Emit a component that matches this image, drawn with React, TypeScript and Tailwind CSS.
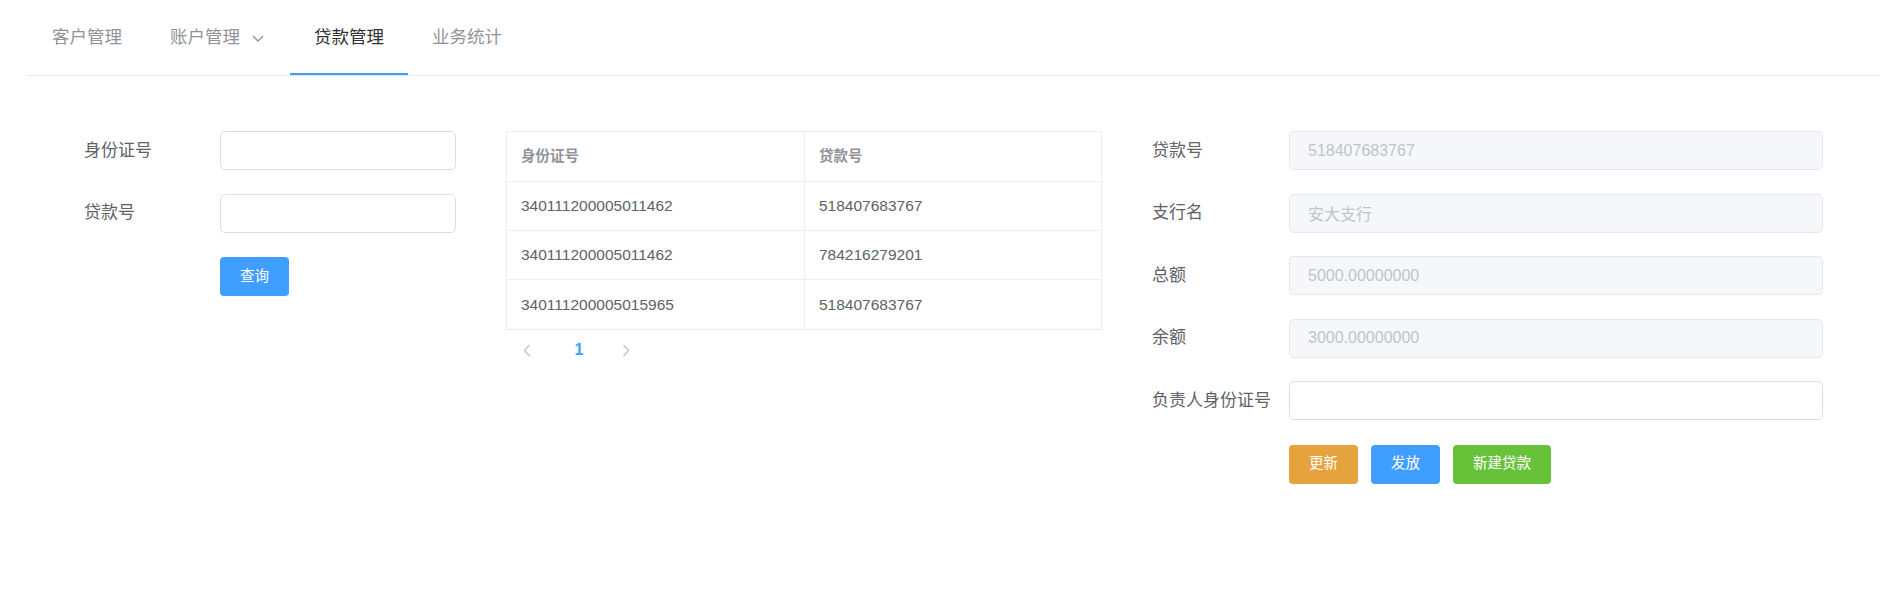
const tabs = [
  { label: '客户管理', active: false, arrow: false },
  { label: '账户管理', active: false, arrow: true },
  { label: '贷款管理', active: true, arrow: false },
  { label: '业务统计', active: false, arrow: false },
]

const rows = [
  { id: '340111200005011462', loan: '518407683767' },
  { id: '340111200005011462', loan: '784216279201' },
  { id: '340111200005015965', loan: '518407683767' },
]

const details = [
  { label: '贷款号', value: '518407683767', disabled: true },
  { label: '支行名', value: '安大支行', disabled: true },
  { label: '总额', value: '5000.00000000', disabled: true },
  { label: '余额', value: '3000.00000000', disabled: true },
  { label: '负责人身份证号', value: '', disabled: false },
]

function Field({ label, value, disabled, labelWidth, inputWidth }: {
  label: string
  value: string
  disabled: boolean
  labelWidth: string
  inputWidth: string
}) {
  return (
    <div className="flex items-center mb-[23.5px]">
      <span className={`${labelWidth} text-[17px] leading-[24px] text-[#606266]`}>{label}</span>
      <input
        readOnly
        value={value}
        className={
          disabled
            ? `${inputWidth} h-[39px] rounded-[5px] border border-[#e4e7ed] bg-[#f5f7fa] pl-[18px] text-[16px] text-[#c0c4cc] outline-none`
            : `${inputWidth} h-[39px] rounded-[5px] border border-[#dcdfe6] bg-white pl-[18px] text-[16px] text-[#606266] outline-none`
        }
      />
    </div>
  )
}

export default function App() {
  return (
    <div
      className="w-[1901px] h-[600px] bg-white"
      style={{ fontFamily: '"Liberation Sans", "Noto Sans CJK SC", sans-serif' }}
    >
      {/* top menu */}
      <div className="ml-[28px] w-[1851px] pt-[2px] flex border-b border-[#e6e6e6]">
        {tabs.map((t) => (
          <div
            key={t.label}
            className={
              t.active
                ? 'h-[73px] px-[24px] flex items-center border-b-2 border-[#409eff] text-[#303133] text-[17.5px]'
                : 'h-[73px] px-[24px] flex items-center border-b-2 border-transparent text-[#909399] text-[17.5px]'
            }
          >
            <span>{t.label}</span>
            {t.arrow && (
              <svg className="ml-[10px]" width="16" height="16" viewBox="0 0 16 16" fill="none">
                <path d="M3 6L8 11L13 6" stroke="#909399" strokeWidth="1.3" />
              </svg>
            )}
          </div>
        ))}
      </div>

      <div className="flex items-start pl-[84px] pt-[55px]">
        {/* search form */}
        <div className="w-[372px]">
          <Field label="身份证号" value="" disabled={false} labelWidth="w-[136px]" inputWidth="w-[236px]" />
          <Field label="贷款号" value="" disabled={false} labelWidth="w-[136px]" inputWidth="w-[236px]" />
          <div className="pl-[136px] pt-[1px]">
            <button className="h-[39px] px-[20px] rounded-[4px] bg-[#409eff] text-white text-[14.5px]">查询</button>
          </div>
        </div>

        {/* result table */}
        <div className="ml-[50px] w-[596px]">
          <div className="border border-[#ebeef5]">
            <div className="flex h-[50px] border-b border-[#ebeef5] text-[14.5px] font-bold text-[#909399]">
              <div className="w-[298px] flex items-center pl-[14px] border-r border-[#ebeef5]">身份证号</div>
              <div className="flex-1 flex items-center pl-[14px]">贷款号</div>
            </div>
            {rows.map((r, i) => (
              <div
                key={i}
                className={
                  i < rows.length - 1
                    ? 'flex h-[49px] border-b border-[#ebeef5] text-[15.5px] text-[#606266]'
                    : 'flex h-[49px] text-[15.5px] text-[#606266]'
                }
              >
                <div className="w-[298px] flex items-center pl-[14px] border-r border-[#ebeef5]">{r.id}</div>
                <div className="flex-1 flex items-center pl-[14px]">{r.loan}</div>
              </div>
            ))}
          </div>
          <div className="flex items-center h-[40px]">
            <div className="w-[42px] flex justify-center">
              <svg width="8" height="13" viewBox="0 0 8 13" fill="none">
                <path d="M6.5 1L1.5 6.5L6.5 12" stroke="#c0c4cc" strokeWidth="1.4" />
              </svg>
            </div>
            <div className="w-[62px] text-center text-[16px] font-bold text-[#409eff]">1</div>
            <div className="w-[31px] flex justify-center">
              <svg width="8" height="13" viewBox="0 0 8 13" fill="none">
                <path d="M1.5 1L6.5 6.5L1.5 12" stroke="#c0c4cc" strokeWidth="1.4" />
              </svg>
            </div>
          </div>
        </div>

        {/* loan detail form */}
        <div className="ml-[50px]">
          {details.map((d) => (
            <Field
              key={d.label}
              label={d.label}
              value={d.value}
              disabled={d.disabled}
              labelWidth="w-[137px]"
              inputWidth="w-[534px]"
            />
          ))}
          <div className="pl-[137px] pt-[1px] flex gap-[13px]">
            <button className="h-[39px] px-[20px] rounded-[4px] bg-[#e6a23c] text-white text-[14.5px]">更新</button>
            <button className="h-[39px] px-[20px] rounded-[4px] bg-[#409eff] text-white text-[14.5px]">发放</button>
            <button className="h-[39px] px-[20px] rounded-[4px] bg-[#67c23a] text-white text-[14.5px]">新建贷款</button>
          </div>
        </div>
      </div>
    </div>
  )
}
